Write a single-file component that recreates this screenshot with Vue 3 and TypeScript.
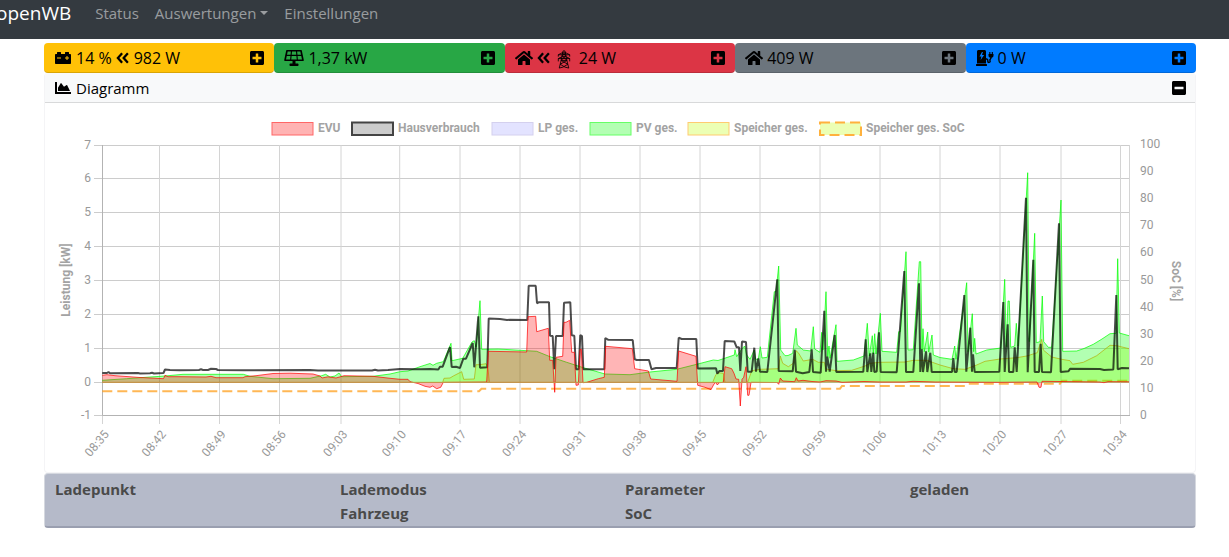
<script setup lang="ts">
type Point = [number, number]

interface Tile {
  id: string
  color: string
  icons: string[]
  text: string
  name: string
}

const tiles: Tile[] = [
  { id: 'battery', color: 'yellow', icons: ['battery'], text: '14 %', name: 'Speicher' },
  { id: 'pv', color: 'green', icons: ['solar'], text: '1,37 kW', name: 'Photovoltaik' },
  { id: 'grid', color: 'red', icons: ['home', 'left', 'pylon'], text: '24 W', name: 'Netz' },
  { id: 'house', color: 'gray', icons: ['home'], text: '409 W', name: 'Hausverbrauch' },
  { id: 'charge', color: 'blue', icons: ['station'], text: '0 W', name: 'Ladepunkte' },
]

const chargeColumns: string[][] = [
  ['Ladepunkt'],
  ['Lademodus', 'Fahrzeug'],
  ['Parameter', 'SoC'],
  ['geladen'],
]

const legend = [
  { label: 'EVU', x: 272, cls: 'evu' },
  { label: 'Hausverbrauch', x: 352, cls: 'house' },
  { label: 'LP ges.', x: 492, cls: 'lp' },
  { label: 'PV ges.', x: 590, cls: 'pv' },
  { label: 'Speicher ges.', x: 688, cls: 'battery' },
  { label: 'Speicher ges. SoC', x: 820, cls: 'soc' },
]

const zeroY = 382.5
const kwTicks = [7, 6, 5, 4, 3, 2, 1, 0, -1].map((value, i) => ({
  value,
  y: [145.5, 178.5, 212.5, 246.5, 280.5, 314.5, 348.5, 382.5, 415.5][i],
}))
const socTicks = [100, 90, 80, 70, 60, 50, 40, 30, 20, 10, 0].map((value, i) => ({
  value,
  y: 144 + i * 27.1,
}))
const timeTicks = [
  { label: '08:35', x: 102.5 }, { label: '08:42', x: 159.5 }, { label: '08:49', x: 219.5 },
  { label: '08:56', x: 279.5 }, { label: '09:03', x: 341 }, { label: '09:10', x: 399.7 },
  { label: '09:17', x: 460 }, { label: '09:24', x: 520 }, { label: '09:31', x: 580 },
  { label: '09:38', x: 640 }, { label: '09:45', x: 700 }, { label: '09:52', x: 760 },
  { label: '09:59', x: 820 }, { label: '10:06', x: 880 }, { label: '10:13', x: 940 },
  { label: '10:20', x: 1000 }, { label: '10:27', x: 1061 }, { label: '10:34', x: 1120.5 },
]

const house: Point[] = [
  [102.3, 373], [107, 373], [108.5, 372], [110, 373.2], [138, 373], [140, 373.5], [150, 373.2], [152, 372.7], [154, 373.5], [163.5, 373], [165, 369.5], [170, 370], [180, 370.2], [199, 370], [201, 369.3], [203, 370], [208, 370], [211, 368.8], [216, 369], [218, 370], [245, 370.2], [310, 370], [318, 370.5],
  [372, 370.5], [375, 369.7], [378, 370.5], [388, 370], [400, 369], [420, 369.3], [430, 369], [438.3, 369.5], [440, 366.7], [442.7, 366.7], [450, 347], [451.7, 367], [456, 366.7], [460, 368], [463.3, 358.7], [466, 358.7], [472.7, 343], [474.3, 367.3], [478.3, 316.3], [480, 367.7], [487.3, 367.3], [488.7, 318.5],
  [500, 319], [507, 320], [510, 319.7], [527.3, 320], [528.7, 285.7], [535.7, 285.7], [537, 303.3], [538.5, 302.3], [549, 302.3], [550, 335.7], [552.7, 336], [554.3, 369.3], [556, 336], [562.7, 336], [564, 302.7], [570.3, 302.3], [571.7, 335.3], [574.3, 335.7], [576, 369.3], [578.7, 369.3], [580.3, 335],
  [582, 336], [583.3, 369.3], [604.3, 369.3], [605.3, 338], [608.3, 339.8], [632.7, 340], [634.7, 359.3], [636.7, 360], [649, 360], [651.5, 369.3], [656, 368], [676.7, 368], [678.7, 337.7], [681.7, 339], [696.3, 339], [697.7, 368.5], [716, 368.3], [717.3, 373.7], [719.3, 371], [723, 371], [724.7, 341],
  [734.3, 341.5], [736.7, 347.3], [739, 347.3], [740.3, 371], [742, 341.5], [746, 342], [747.7, 371.7], [751.7, 371.7], [754.3, 347.7], [756, 371.7], [758.3, 358.3], [760, 371.7], [767.3, 372], [777.3, 279.3], [778.7, 371], [792.7, 371.3], [794.7, 349.7], [796, 371.7], [802.7, 373.3], [809.3, 372],
  [811.7, 349.3], [813, 372], [820.7, 372.7], [824.3, 310.7], [826, 371.7], [827.3, 356.7], [829.7, 371.7], [834.7, 335], [836.3, 372], [863.3, 371.7], [865.7, 339.3], [867.3, 372], [870.3, 353.3], [871.3, 372], [873.3, 352.7], [874.3, 372], [876.7, 371.5], [879, 332.3], [880.7, 372], [896.7, 372.3],
  [904.3, 271], [906, 372], [913.3, 372], [919, 283.3], [920.3, 372], [921.7, 349.3], [923, 372], [926, 351.3], [927.3, 372], [930.3, 352.7], [931.7, 372], [952, 372], [953.3, 358], [954.7, 372], [956.7, 372], [964.3, 295], [966.3, 371.7], [970.3, 327.7], [972, 371.7], [973, 354.3], [974.7, 372],
  [999.3, 371.7], [1003.3, 302], [1004.7, 372], [1007.7, 324.3], [1009, 372], [1013.3, 372], [1014.7, 347.3], [1016.7, 372], [1026, 197.7], [1027.7, 372.3], [1033.3, 259.7], [1034.7, 372], [1039, 372], [1040.7, 343.7], [1042, 372], [1051, 372.3], [1059, 223.3], [1060.7, 372], [1068.3, 371.3],
  [1070.3, 368.7], [1100, 369], [1104, 370], [1113.3, 369.5], [1116.3, 295], [1117.7, 369.3], [1122, 368], [1129, 368.3],
]

const pv: Point[] = [
  [102.3, 380.3], [126.7, 378.7], [150, 377], [165, 376], [183, 374.3], [243.3, 374.3], [250, 376.3], [273, 378.7], [310, 378.3], [321.7, 375.7], [325.7, 374.3], [330, 377], [335, 376], [339, 373], [341.7, 376.7], [373, 376.3], [390, 374], [400, 371.7], [408, 371], [420, 366.7], [430, 363.5], [433, 365.3],
  [436.7, 363.3], [443.3, 361.7], [451, 343.3], [452, 360.7], [462.7, 358.3], [472, 342], [474.3, 340.7], [476, 347], [480, 300.7], [481.7, 349.3], [498.3, 349], [526.7, 350.7], [536.7, 351.3], [550, 356.7], [566.7, 362.3], [583.3, 367.7], [605, 374], [630, 374.7], [650, 372], [676.7, 369.3], [696.7, 364.3],
  [713.3, 360], [718, 360.5], [734.3, 355], [735, 349.7], [736.7, 356.7], [742, 348.7], [744.7, 346], [746.7, 355], [750, 359.3], [754.3, 350], [755.7, 359.3], [758.3, 359.3], [760.3, 346.7], [762, 358], [767.3, 357.3], [774.3, 291.7], [776, 291.7], [778.7, 266], [780.7, 350], [785, 355.7], [788, 355.5], [792.7, 353.3],
  [796, 328.3], [797.3, 345], [803.3, 350], [810.7, 351], [813.3, 326.7], [814.7, 349], [820, 352.3], [821.7, 332.3], [823, 350], [826, 291.7], [827.7, 356.7], [829, 346], [830, 358.3], [836, 324.7], [837, 361.3], [853.3, 360], [864, 356], [867.3, 323.3], [869.3, 356], [872.3, 335.7], [873.3, 354], [874.7, 333.7],
  [876, 354], [880.3, 313.3], [882, 351.3], [896.7, 352.3], [898.7, 331.7], [900.5, 331.7], [906, 251.7], [908, 350], [913.3, 349.7], [919.3, 261.7], [920.7, 261.7], [922, 350], [923, 328.7], [924.3, 351.7], [927.7, 332], [928.7, 352], [932, 335], [933.3, 355], [940, 357.5], [952, 359.3], [954.7, 346], [956, 359.3],
  [966.7, 282.7], [968, 351.7], [972.3, 313.7], [973.7, 351.7], [974.7, 338.3], [976, 354], [986.7, 350], [1000.7, 348], [1004.7, 279.3], [1006.3, 346.7], [1008, 301], [1009.3, 301], [1010.7, 347.3], [1014.7, 346], [1016.3, 323.3], [1018, 346], [1027.7, 172.7], [1029.3, 341.7], [1034.7, 233.3], [1036.3, 342.7],
  [1040, 341.7], [1042.3, 296], [1043.7, 341.7], [1048.3, 347.3], [1051.7, 347.3], [1061, 200], [1062.7, 351.3], [1076.7, 351], [1084, 348.5], [1093.3, 344.3], [1102, 339], [1110, 333.7], [1116, 333.3], [1117.7, 258.7], [1119.3, 333], [1129, 335.7],
]

const evu: Point[] = [
  [102.3, 375.3], [107, 374.7], [115, 375.7], [140, 377.5], [150, 378], [163.5, 378.7], [165, 375.3], [168, 376.7], [180, 376.7], [206, 377], [211, 376.3], [216, 377.7], [243, 377.7], [245, 376.7], [256, 375.7], [273, 373.5], [290, 373.2], [313, 374], [320, 376], [322, 378], [328, 376.8], [336, 378], [344, 375.7],
  [373, 376.3], [390, 378.3], [400, 379.3], [408, 379.3], [410, 381.7], [418, 383.5], [425, 386.3], [430, 387.3], [432.7, 386], [436.7, 388.7], [440.7, 387.3], [443.3, 382.3], [486.7, 382], [488.3, 351.3], [526.7, 352], [528, 316.7], [535.7, 316.3], [536.7, 331.7], [548.3, 328.3], [549.7, 360.3], [552.7, 360.3],
  [554.7, 392.3], [556, 357.3], [562.7, 356.3], [564, 322.3], [566, 322.3], [569.7, 320.3], [571.7, 352.3], [574.3, 352.3], [576, 385.3], [578.3, 385], [580, 349.3], [581.3, 349.3], [583, 382.7], [586.7, 382.3], [598.3, 378.7], [604.3, 377.3], [605.7, 346.3], [632.3, 348.7], [634.7, 368.7], [648.3, 371], [650.7, 379],
  [677, 381.3], [678.7, 351], [696, 356.3], [697.7, 385.3], [705, 387.3], [711, 389.7], [714, 384], [716, 382.3], [717.3, 385], [719.3, 382.7], [723.3, 382.3], [725, 366.7], [731.7, 368.7], [734, 373.3], [736, 379], [738.7, 379.3], [740.3, 406], [742, 379.3], [743.7, 377.3], [746, 366.7], [747.7, 395.3], [749, 395.3],
  [751, 382.3], [777, 382.5], [778.7, 384.3], [780.3, 378], [782.7, 381], [794.7, 381.7], [796.3, 377.7], [798, 381], [803, 380.3], [812, 381.5], [820, 382], [826, 380.7], [836, 381], [842, 382.3], [864, 381.5], [880, 382], [906, 382], [913, 381.3], [935, 382], [1000, 382.3], [1037, 382], [1039, 387.3], [1041, 387.3], [1042, 381.3], [1100, 382], [1104, 382.7], [1108, 381.7], [1129, 381.8],
]

const battery: Point[] = [
  [102.3, 382.3], [442.7, 382.3], [444, 378.3], [450, 378], [453.3, 376], [461.7, 371.7], [463.7, 379.3], [474.3, 379], [476, 364.7], [480, 364.7], [486, 363.7], [488, 368], [489.3, 382.3], [712.7, 382.3], [715.7, 375], [718, 372.7], [723.3, 373.3], [725, 382.3], [747.7, 382.3], [751.7, 370.7], [760, 369.3], [778.3, 368.7],
  [780.3, 356], [782.7, 363.3], [788.3, 366.7], [793.3, 363.3], [796, 350.7], [798.3, 352.7], [803.3, 361], [812.7, 359.3], [818.3, 362.3], [824.3, 362.3], [826, 369], [836, 370.7], [851.7, 370.3], [865, 366], [870, 363.3], [880, 362.3], [905, 362], [913.3, 360.3], [926.7, 360.3], [940, 365], [953.3, 368.7], [965, 369.3],
  [976.7, 365], [985, 361.3], [1000, 359], [1016.7, 357.7], [1026.7, 356], [1037.3, 352.7], [1041.7, 339.3], [1043.3, 350], [1051.7, 357], [1061.7, 359.3], [1070, 360.7], [1072.7, 364.3], [1083.3, 362.3], [1096.7, 355.7], [1110, 345.3], [1116.7, 345.7], [1129, 348.7],
]

const soc: Point[] = [
  [102.3, 391.3], [479, 391.3], [481.5, 388.7], [840, 388.7], [842, 386], [965, 386], [967, 383.7], [1060, 383.7], [1062, 380.8], [1129, 380.8],
]

const line = (points: Point[]): string => 'M' + points.map((p) => p.join(',')).join('L')
const area = (points: Point[]): string =>
  `${line(points)}L${points[points.length - 1][0]},${zeroY}L${points[0][0]},${zeroY}Z`
</script>

<template>
  <svg class="sprite" aria-hidden="true">
    <symbol id="i-battery" viewBox="0 0 512 512">
      <path d="M480 128h-32V80c0-8.84-7.16-16-16-16h-96c-8.84 0-16 7.16-16 16v48H192V80c0-8.84-7.16-16-16-16H80c-8.84 0-16 7.16-16 16v48H32c-17.67 0-32 14.33-32 32v256c0 17.67 14.33 32 32 32h448c17.67 0 32-14.33 32-32V160c0-17.67-14.33-32-32-32zM192 264c0 4.42-3.58 8-8 8H72c-4.42 0-8-3.58-8-8v-16c0-4.42 3.58-8 8-8h112c4.42 0 8 3.58 8 8v16zm256 0c0 4.42-3.58 8-8 8h-40v40c0 4.42-3.58 8-8 8h-16c-4.42 0-8-3.58-8-8v-40h-40c-4.42 0-8-3.58-8-8v-16c0-4.42 3.58-8 8-8h40v-40c0-4.42 3.58-8 8-8h16c4.42 0 8 3.58 8 8v40h40c4.42 0 8 3.58 8 8v16z" />
    </symbol>
    <symbol id="i-solar" viewBox="0 0 640 512">
      <path d="M96 24H544L608 328H32Z" fill="none" stroke="currentColor" stroke-width="52" stroke-linejoin="round" />
      <path d="M60 170H580M240 24L212 328M400 24L428 328" fill="none" stroke="currentColor" stroke-width="36" />
      <path d="M272 340h96v92h72c12 0 24 10 24 24v32c0 12-10 24-24 24H200c-12 0-24-10-24-24v-32c0-12 10-24 24-24h72z" />
    </symbol>
    <symbol id="i-home" viewBox="0 0 576 512">
      <path d="M280.37 148.26L96 300.11V464a16 16 0 0 0 16 16l112.06-.29a16 16 0 0 0 15.92-16V368a16 16 0 0 1 16-16h64a16 16 0 0 1 16 16v95.64a16 16 0 0 0 16 16.05L464 480a16 16 0 0 0 16-16V300L295.67 148.26a12.19 12.19 0 0 0-15.3 0zM571.6 251.47L488 182.56V44.05a12 12 0 0 0-12-12h-56a12 12 0 0 0-12 12v72.61L318.47 43a48 48 0 0 0-61 0L4.34 251.47a12 12 0 0 0-1.6 16.9l25.5 31A12 12 0 0 0 45.15 301l235.22-193.74a12.19 12.19 0 0 1 15.3 0L530.9 301a12 12 0 0 0 16.9-1.6l25.5-31a12 12 0 0 0-1.7-16.93z" />
    </symbol>
    <symbol id="i-left" viewBox="0 0 448 512">
      <path d="M196 104L60 256L196 408M380 104L244 256L380 408" fill="none" stroke="currentColor" stroke-width="72" />
    </symbol>
    <symbol id="i-pylon" viewBox="0 0 14 20">
      <path d="M5 6L6 1H8L9 6L10 11L12 19M5 6L4 11L2 19M1 5L5 3H9L13 5M1 5V7M13 5V7M1 5H13M1 9L5 7H9L13 9M1 9V12M13 9V12M1 9H13M5 3L9 6M9 3L5 6M5 6L10 11M9 6L4 11M4 11H10M4 11L11 15M10 11L3 15M3 15L8 18L12 19M11 15L6 18L2 19" fill="none" stroke="currentColor" stroke-width="0.9" />
    </symbol>
    <symbol id="i-station" viewBox="0 0 576 512">
      <path fill-rule="evenodd" d="M80 0H272C300 0 320 20 320 48V432H32V48C32 20 52 0 80 0ZM190 64L112 208H172L148 320L260 160H192L222 64Z" />
      <path d="M16 448H336C346 448 352 454 352 464V496C352 506 346 512 336 512H16C6 512 0 506 0 496V464C0 454 6 448 16 448Z" />
      <path d="M320 288H344C374 288 380 310 380 350V376C380 405 440 405 452 370C458 350 420 320 460 290C490 270 480 230 480 220" fill="none" stroke="currentColor" stroke-width="46" />
      <path d="M400 128H560V176C560 220 530 248 480 248C430 248 400 220 400 176ZM424 64H460V136H424ZM504 64H540V136H504Z" />
    </symbol>
    <symbol id="i-plus" viewBox="0 0 448 512">
      <path d="M400 32H48C21.5 32 0 53.5 0 80v352c0 26.5 21.5 48 48 48h352c26.5 0 48-21.5 48-48V80c0-26.5-21.5-48-48-48zm-32 252c0 6.6-5.4 12-12 12h-92v92c0 6.6-5.4 12-12 12h-56c-6.6 0-12-5.4-12-12v-92H92c-6.6 0-12-5.4-12-12v-56c0-6.6 5.4-12 12-12h92v-92c0-6.6 5.4-12 12-12h56c6.6 0 12 5.4 12 12v92h92c6.6 0 12 5.4 12 12v56z" />
    </symbol>
    <symbol id="i-minus" viewBox="0 0 448 512">
      <path d="M400 32H48C21.5 32 0 53.5 0 80v352c0 26.5 21.5 48 48 48h352c26.5 0 48-21.5 48-48V80c0-26.5-21.5-48-48-48zM92 296c-6.6 0-12-5.4-12-12v-56c0-6.6 5.4-12 12-12h264c6.6 0 12 5.4 12 12v56c0 6.6-5.4 12-12 12H92z" />
    </symbol>
    <symbol id="i-chart" viewBox="0 0 512 512">
      <path d="M500 384c6.6 0 12 5.4 12 12v40c0 6.6-5.4 12-12 12H12c-6.6 0-12-5.4-12-12V76c0-6.6 5.4-12 12-12h40c6.6 0 12 5.4 12 12v308h436zM372.7 159.5L288 216l-85.3-113.7c-5.1-6.8-15.5-6.3-19.9 1L96 248v104h384l-89.9-187.8c-3.2-6.5-11.4-8.7-17.4-4.7z" />
    </symbol>
  </svg>

  <div class="page">
    <nav class="navbar">
      <a class="brand" href="#">openWB</a>
      <a class="nav-link" href="#status">Status</a>
      <a class="nav-link dropdown" href="#auswertungen">Auswertungen</a>
      <a class="nav-link" href="#einstellungen">Einstellungen</a>
    </nav>

    <main class="content">
      <div class="tiles">
        <section v-for="tile in tiles" :key="tile.id" class="tile" :class="tile.color">
          <div class="value">
            <svg v-for="icon in tile.icons" :key="icon" class="icon" :class="icon"><use :href="`#i-${icon}`" /></svg>
            <span>{{ tile.text }}</span>
            <template v-if="tile.id === 'battery'">
              <svg class="icon left"><use href="#i-left" /></svg>
              <span>982 W</span>
            </template>
          </div>
          <button class="toggle" type="button" :aria-label="`${tile.name} aufklappen`">
            <svg class="icon square"><use href="#i-plus" /></svg>
          </button>
        </section>
      </div>

      <section class="card">
        <header class="card-header">
          <div class="value">
            <svg class="icon chart-icon"><use href="#i-chart" /></svg>
            <span>Diagramm</span>
          </div>
          <button class="toggle" type="button" aria-label="Diagramm einklappen">
            <svg class="icon square"><use href="#i-minus" /></svg>
          </button>
        </header>

        <svg class="chart" viewBox="45 103 1150 369" role="img" aria-label="Leistung und SoC">
          <g v-for="item in legend" :key="item.label">
            <rect :x="item.x" y="122.5" width="41" height="12.5" class="key" :class="`key-${item.cls}`" />
            <text :x="item.x + 46" y="128" class="label strong">{{ item.label }}</text>
          </g>

          <g class="grid">
            <line v-for="t in kwTicks" :key="t.value" x1="94" x2="1130" :y1="t.y" :y2="t.y" />
            <line v-for="t in timeTicks" :key="t.label" :x1="t.x" :x2="t.x" y1="145" y2="424" class="vertical" />
            <line x1="1129.5" x2="1129.5" y1="145" y2="416" class="vertical" />
            <path d="M102.5 145V415.5H1130" class="axis" />
          </g>

          <path :d="line(soc)" class="soc-line" />
          <path :d="area(battery)" class="battery-area" />
          <path :d="line(battery)" class="battery-line" />
          <path :d="area(pv)" class="pv-area" />
          <path :d="line(pv)" class="pv-line" />
          <path :d="line(house)" class="house-line" />
          <path :d="area(evu)" class="evu-area" />
          <path :d="line(evu)" class="evu-line" />
          <path d="M102.5 382.5H778" class="zero-line" />

          <text v-for="t in kwTicks" :key="t.value" x="91" :y="t.y - 1" class="label tick end">{{ t.value }}</text>
          <text v-for="t in socTicks" :key="t.value" x="1140" :y="t.y" class="label tick">{{ t.value }}</text>
          <text v-for="t in timeTicks" :key="t.label" class="label tick end" :transform="`translate(${t.x + 4} 432) rotate(-50)`">{{ t.label }}</text>
          <text class="label strong middle" transform="translate(66 280) rotate(-90)">Leistung [kW]</text>
          <text class="label strong middle" transform="translate(1176 281) rotate(90)">SoC [%]</text>
        </svg>
      </section>

      <section class="charge-points">
        <div v-for="column in chargeColumns" :key="column[0]">
          <div v-for="title in column" :key="title">{{ title }}</div>
        </div>
      </section>
    </main>
  </div>
</template>

<style>
body {
  margin: 0;
  background: #fff;
}
</style>

<style scoped>
.page {
  font-family: "Open Sans", "Noto Sans", sans-serif;
  font-size: 15px;
  line-height: 24px;
  color: #000;
  overflow: hidden;
}
.sprite {
  position: absolute;
  width: 0;
  height: 0;
}
.navbar {
  display: flex;
  align-items: center;
  gap: 16px;
  height: 26px;
  margin-left: -4px;
  padding-bottom: 13px;
  background: #343a40;
}
.navbar a {
  text-decoration: none;
}
.brand {
  color: #fff;
  font-size: 19px;
  margin-right: 8px;
}
.nav-link {
  color: rgba(255, 255, 255, 0.5);
}
.dropdown::after {
  content: "";
  display: inline-block;
  margin-left: 4px;
  vertical-align: 4px;
  border-top: 4px solid;
  border-left: 4px solid transparent;
  border-right: 4px solid transparent;
}
.content {
  padding: 4px 33px 30px 44px;
}
.tiles {
  display: grid;
  grid-template-columns: repeat(5, 1fr);
}
.tile,
.card-header {
  display: flex;
  align-items: center;
  justify-content: space-between;
  box-sizing: border-box;
  height: 30px;
  padding: 0 10px;
}
.tile {
  border-radius: 4px;
  border-bottom: 1px solid rgba(0, 0, 0, 0.15);
  font-size: 16px;
}
.yellow { background: #ffc107; }
.green { background: #28a745; }
.red { background: #dc3545; }
.gray { background: #6c757d; }
.blue { background: #007bff; }
.value {
  display: flex;
  align-items: center;
  gap: 4px;
}
.icon {
  display: block;
  width: 18px;
  height: 16px;
  fill: currentColor;
}
.solar { width: 20px; }
.left { width: 14px; }
.pylon {
  width: 14px;
  height: 19px;
  margin: 4px 4px 0 2px;
}
.square { width: 14px; }
.toggle {
  padding: 0;
  border: 0;
  background: none;
  color: inherit;
  cursor: pointer;
}
.card {
  border: 1px solid #f4f4f6;
  border-top: 0;
  border-radius: 4px;
}
.card-header {
  background: #f8f9fa;
  border-bottom: 1px solid #d8d9da;
  padding: 0 9px;
  border-radius: 4px 4px 0 0;
}
.chart {
  display: block;
  width: 100%;
  height: auto;
}
.label {
  font-family: Roboto, "Liberation Sans", sans-serif;
  font-size: 12px;
  fill: #999;
  dominant-baseline: central;
}
.strong {
  font-weight: 700;
  fill: #a3a3a3;
}
.end { text-anchor: end; }
.middle { text-anchor: middle; }
.key { stroke-width: 1; }
.key-evu { fill: #ffb3b3; stroke: #ff6666; }
.key-house { fill: #ccc; stroke: #444; stroke-width: 2; }
.key-lp { fill: #e3e3ff; stroke: #d4d0ee; }
.key-pv { fill: #b3ffb3; stroke: #66ff66; }
.key-battery { fill: #ecffb4; stroke: #ffcb70; }
.key-soc { fill: #ecffb4; stroke: #ffb13d; stroke-width: 2; stroke-dasharray: 10 5; }
.grid line { stroke: #ccc; }
.grid .vertical { stroke: #d4d4d4; }
.axis { fill: none; stroke: #b3b3b3; }
.soc-line,
.battery-line,
.pv-line,
.house-line,
.evu-line,
.zero-line { fill: none; }
.soc-line { stroke: rgba(255, 153, 13, 0.7); stroke-width: 2; stroke-dasharray: 10 5; }
.battery-area { fill: rgba(200, 255, 13, 0.3); }
.battery-line { stroke: rgba(255, 140, 13, 0.7); }
.pv-area { fill: rgba(0, 255, 0, 0.3); }
.pv-line { stroke: rgba(0, 255, 0, 0.7); stroke-linejoin: bevel; }
.house-line { stroke: rgba(0, 0, 0, 0.7); stroke-width: 2; stroke-linejoin: bevel; }
.evu-area { fill: rgba(255, 10, 13, 0.3); }
.evu-line { stroke: rgba(255, 0, 0, 0.7); }
.zero-line { stroke: #c4944c; }
.charge-points {
  display: grid;
  grid-template-columns: repeat(4, 1fr);
  min-height: 48px;
  padding: 3px 0 1px 10px;
  border: 1px solid #d5d8df;
  border-bottom: 2px solid #9a9fb0;
  border-radius: 4px;
  background: #b5bac9;
  color: #4a4a4a;
  font-weight: 700;
}
</style>
